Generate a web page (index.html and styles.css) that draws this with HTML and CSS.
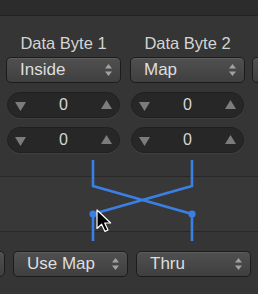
FILE: index.html
```html
<!DOCTYPE html>
<html>
<head>
<meta charset="utf-8">
<link rel="stylesheet" href="styles.css">
</head>
<body>
<div class="screen">
  <div class="topbar"></div>
  <div class="panel">
    <div class="col">
      <div class="label">Data Byte 1</div>
      <div class="popup"><span>Inside</span><svg class="updown" width="7" height="12" viewBox="0 0 7 12"><polygon points="3.5,0 7,4.5 0,4.5"/><polygon points="0,7.5 7,7.5 3.5,12"/></svg></div>
      <div class="stepper"><svg class="tri" width="11" height="9" viewBox="0 0 11 9"><polygon points="0,0 11,0 5.5,9"/></svg><span>0</span><svg class="tri up" width="11" height="9" viewBox="0 0 11 9"><polygon points="5.5,0 11,9 0,9"/></svg></div>
      <div class="stepper"><svg class="tri" width="11" height="9" viewBox="0 0 11 9"><polygon points="0,0 11,0 5.5,9"/></svg><span>0</span><svg class="tri up" width="11" height="9" viewBox="0 0 11 9"><polygon points="5.5,0 11,9 0,9"/></svg></div>
    </div>
    <div class="col">
      <div class="label">Data Byte 2</div>
      <div class="popup"><span>Map</span><svg class="updown" width="7" height="12" viewBox="0 0 7 12"><polygon points="3.5,0 7,4.5 0,4.5"/><polygon points="0,7.5 7,7.5 3.5,12"/></svg></div>
      <div class="stepper"><svg class="tri" width="11" height="9" viewBox="0 0 11 9"><polygon points="0,0 11,0 5.5,9"/></svg><span>0</span><svg class="tri up" width="11" height="9" viewBox="0 0 11 9"><polygon points="5.5,0 11,9 0,9"/></svg></div>
      <div class="stepper"><svg class="tri" width="11" height="9" viewBox="0 0 11 9"><polygon points="0,0 11,0 5.5,9"/></svg><span>0</span><svg class="tri up" width="11" height="9" viewBox="0 0 11 9"><polygon points="5.5,0 11,9 0,9"/></svg></div>
    </div>
    <div class="col col-edge">
      <div class="label">&nbsp;</div>
      <div class="popup"><span></span></div>
    </div>
  </div>
  <div class="mid"></div>
  <div class="bottom">
    <div class="popup"><span></span><svg class="updown" width="7" height="12" viewBox="0 0 7 12"><polygon points="3.5,0 7,4.5 0,4.5"/><polygon points="0,7.5 7,7.5 3.5,12"/></svg></div>
    <div class="popup"><span>Use Map</span><svg class="updown" width="7" height="12" viewBox="0 0 7 12"><polygon points="3.5,0 7,4.5 0,4.5"/><polygon points="0,7.5 7,7.5 3.5,12"/></svg></div>
    <div class="popup"><span>Thru</span><svg class="updown" width="7" height="12" viewBox="0 0 7 12"><polygon points="3.5,0 7,4.5 0,4.5"/><polygon points="0,7.5 7,7.5 3.5,12"/></svg></div>
  </div>
  <svg class="routing" width="258" height="294" viewBox="0 0 258 294">
    <path d="M93 160 V186 L192 214 V241 M192 160 V186 L93 214 V241" fill="none" stroke="#3a80e4" stroke-width="2.6" stroke-linejoin="miter"/>
    <circle cx="93" cy="214" r="3.6" fill="#3a80e4"/>
    <circle cx="192" cy="214" r="3.6" fill="#3a80e4"/>
  </svg>
  <svg class="cursor" width="16" height="24" viewBox="0 0 16 24">
    <path d="M1 1 L1 19.5 L5.6 15.2 L9 22.4 L12 21 L8.7 14 L14.6 14 Z" fill="#000" stroke="#fff" stroke-width="1.2" stroke-linejoin="round"/>
  </svg>
</div>
</body>
</html>
```
FILE: styles.css
```css
html, body {
  margin: 0;
  padding: 0;
  background: #353535;
}
.screen {
  position: relative;
  width: 258px;
  height: 294px;
  overflow: hidden;
  font-family: "Liberation Sans", Arial, sans-serif;
  background: #353535;
}
.topbar {
  height: 15px;
  background: #2c2c2c;
  border-bottom: 1px solid #232323;
}
.panel {
  height: 142px;
  padding: 18px 0 0 6px;
  display: flex;
  gap: 9px;
  border-bottom: 1px solid #282828;
}
.col {
  flex: 0 0 115px;
  display: flex;
  flex-direction: column;
}
.col-edge {
  margin-left: -2px;
}
.label {
  height: 19px;
  line-height: 19px;
  font-size: 16.5px;
  color: #d4d4d4;
  text-align: center;
  margin-bottom: 4px;
}
.popup {
  box-sizing: border-box;
  flex: 0 0 auto;
  width: 115px;
  height: 26px;
  border: 1px solid #1c1c1c;
  border-radius: 5px;
  background: linear-gradient(#505050, #3f3f3f);
  box-shadow: inset 0 1px 0 rgba(255,255,255,0.08);
  display: flex;
  align-items: center;
  padding: 0 8px 0 13px;
  color: #dedede;
  font-size: 17px;
}
.popup span {
  flex: 1;
  line-height: 20px;
}
.updown {
  fill: #a2a2a2;
}
.stepper {
  box-sizing: border-box;
  margin-top: 9px;
  margin-left: 1px;
  width: 113px;
  height: 26px;
  border-radius: 13px;
  background: #272727;
  border: 1px solid #202020;
  box-shadow: 0 1px 0 rgba(255,255,255,0.05);
  display: flex;
  align-items: center;
  padding: 0 7px;
  color: #d6d6d6;
  font-size: 16px;
}
.stepper span {
  flex: 1;
  text-align: center;
  line-height: 20px;
}
.tri {
  fill: #7c7c7c;
  margin-top: 2px;
}
.tri.up {
  margin-top: -2px;
}
.mid {
  height: 54px;
  background: #383838;
  border-bottom: 1px solid #282828;
}
.bottom {
  padding-top: 19px;
  margin-left: -110px;
  display: flex;
  gap: 8px;
}
.bottom .popup {
  flex: 0 0 115px;
}
.routing {
  position: absolute;
  left: 0;
  top: 0;
  pointer-events: none;
}
.cursor {
  position: absolute;
  left: 96px;
  top: 209px;
  pointer-events: none;
}
```
